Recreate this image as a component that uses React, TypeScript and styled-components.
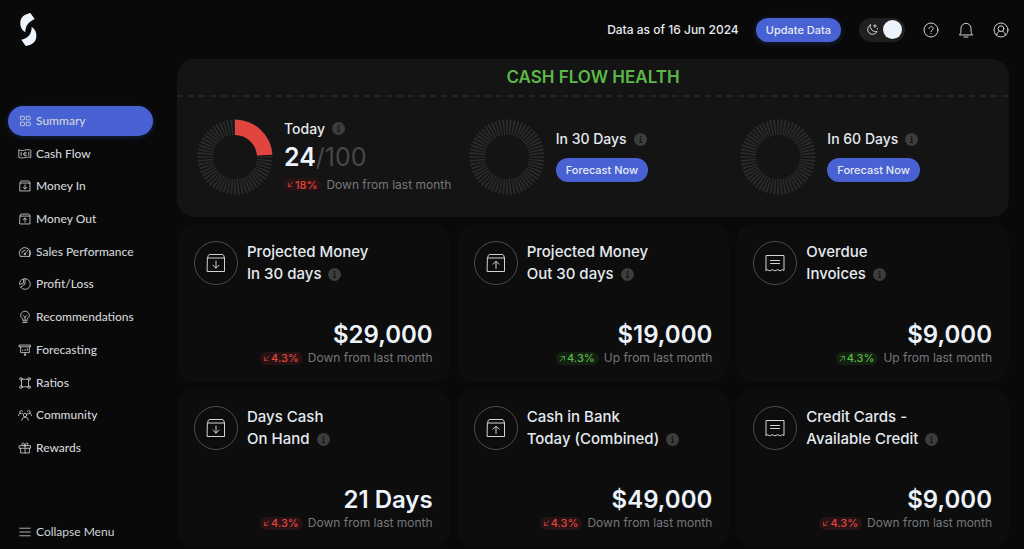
import React from "react";
import styled, { createGlobalStyle, css } from "styled-components";

const color = {
  page: "#090909",
  panel: "#141414",
  card: "#0d0d0d",
  blue: "#4862d3",
  text: "#e4eaf0",
  bright: "#ecf3fb",
  soft: "#d0d4d8",
  muted: "#75777a",
  dim: "#474747",
  red: "#e0453f",
  green: "#5cb948",
};

const body = `Inter, "Liberation Sans", sans-serif`;
const rounded = `Lato, "Liberation Sans", sans-serif`;

const GlobalStyle = createGlobalStyle`
  *, *::before, *::after { box-sizing: border-box; }
  body { margin: 0; background: ${color.page}; color: ${color.text}; font-family: ${body}; }
  h1, h2, h3, p, ul { margin: 0; padding: 0; font-weight: 500; }
  button { font: inherit; border: 0; cursor: pointer; }
`;

/* ---------- icons ---------- */

const Glyph = styled.svg<{ $size: number; $stroke?: number }>`
  width: ${(p) => p.$size}px;
  height: ${(p) => p.$size}px;
  flex: none;
  display: block;
  fill: none;
  stroke: currentColor;
  stroke-width: ${(p) => p.$stroke ?? 1.4};
  stroke-linecap: round;
  stroke-linejoin: round;
`;

const shapes = {
  grid: (
    <>
      <rect x="4" y="4" width="7" height="6" rx="1" />
      <rect x="14" y="4" width="7" height="6" rx="1" />
      <rect x="4" y="14" width="7" height="6" rx="1" />
      <rect x="14" y="14" width="7" height="6" rx="1" />
    </>
  ),
  cash: (
    <>
      <path d="M2 5c3 1.500 6 1.500 9 0.500s7-1.500 11 0V18c-4-1-7-1-10 0s-7 1-10 0Z" />
      <path d="M14.500 9.500c-1-1-4.500-1-4.500 2.500s3.500 3.500 4.500 2.500M9.500 12h4M5.500 9v5.500M18.500 9v5.500" />
    </>
  ),
  boxDown: (
    <>
      <path d="M3.500 7 4.500 4.200Q4.800 3.500 5.600 3.500H18.400Q19.200 3.500 19.500 4.200L20.500 7V20.500H3.500ZM3.500 7H20.500" />
      <path d="M12 10v7M9 14.200l3 3 3-3" />
    </>
  ),
  boxUp: (
    <>
      <path d="M3.500 7 4.500 4.200Q4.800 3.500 5.600 3.500H18.400Q19.200 3.500 19.500 4.200L20.500 7V20.500H3.500ZM3.500 7H20.500" />
      <path d="M12 17.500v-7M9 13.200l3-3 3 3" />
    </>
  ),
  gauge: (
    <>
      <path d="M4 19.500A9.500 9.500 0 0 1 16.500 5.700M20.500 9.500A9.500 9.500 0 0 1 20 19.500Z" />
      <path d="M4 19.500H20M6.500 13.500A5.500 5.500 0 0 1 12 9M12.500 14.500 19 6.500" />
      <circle cx="11.500" cy="15.500" r="1.300" />
    </>
  ),
  pie: (
    <>
      <path d="M12 2.800A9.200 9.200 0 1 1 4.500 17.500" />
      <path d="M12 2.800V12L4.500 17.500M9 3.300A9.200 9.200 0 0 0 2.800 13L9 10.500Z" />
    </>
  ),
  bulb: (
    <>
      <path d="M8.500 18v-2.500C6 14 4.500 12 4.500 9.500a7.500 7.500 0 0 1 15 0c0 2.500-1.500 4.500-4 6V18Z" />
      <path d="M8.500 21.500h7M12 17.500v-5M9 9.500l3 3 3-3" />
    </>
  ),
  board: (
    <>
      <path d="M2.500 3.500h19v3h-19ZM4.500 6.500V16.500h15V6.500M12 16.500v3M8 13v-1M12 13V11M16 13V9.500" />
      <circle cx="12" cy="20.500" r="1" />
    </>
  ),
  nodes: (
    <>
      <circle cx="5" cy="5" r="2.200" />
      <circle cx="19" cy="5" r="2.200" />
      <circle cx="5" cy="19" r="2.200" />
      <circle cx="19" cy="19" r="2.200" />
      <path d="M7.200 5.500h9.600M7.200 18.500h9.600M6 7v10M18 7v10" />
    </>
  ),
  people: (
    <>
      <circle cx="12" cy="12" r="3" />
      <path d="M6.500 21c0-3.500 2.500-5 5.500-5s5.500 1.500 5.500 5M1 13c0-2.500 1-4 3-4.500M23 13c0-2.500-1-4-3-4.500" />
      <path d="M7.500 9.500A2.800 2.800 0 1 1 8 5.500M16.500 9.500A2.800 2.800 0 1 0 16 5.500" />
    </>
  ),
  gift: (
    <>
      <path d="M2.500 8h19v4.500h-19ZM4.500 12.500V20.500h15V12.500M12 8v12.500" />
      <path d="M12 8C8 8 6.500 6.500 7 4.500s4-2 5 3.500c1-5.500 4.500-5.500 5-3.500S16 8 12 8Z" />
    </>
  ),
  menu: <path d="M3 5.500h18M3 12h18M3 18.500h18" />,
  invoice: (
    <>
      <path d="M3 19.500V4.500H21V19.500l-1.500-.8-2.200 1.100-2.500-1.100-2.800 1.100-2.800-1.100-2.500 1.100-2.200-1.100Z" />
      <path d="M7.500 9.500h9M7.500 12.500h9" />
    </>
  ),
  help: (
    <>
      <circle cx="12" cy="12" r="10.500" />
      <path d="M9 9.800c0-4 6.200-3.800 6.200-.2 0 2.400-3.200 2.500-3.200 5M12 17.300v.3" />
    </>
  ),
  bell: (
    <>
      <path d="M2.500 19C4.500 17 4.500 15 4.500 9.500a7.500 7.500 0 0 1 15 0C19.500 15 19.500 17 21.500 19Z" />
      <path d="M9 22.500h6" />
    </>
  ),
  user: (
    <>
      <circle cx="12" cy="12" r="10.500" />
      <circle cx="12" cy="10" r="4.300" />
      <path d="M5.500 19.500c.5-3.500 2.500-5 4-5.700M18.500 19.500c-.5-3.500-2.500-5-4-5.700" />
    </>
  ),
  moon: (
    <>
      <path d="M8 3.500A9.200 9.200 0 1 0 20.500 15.500C13 17.500 6.500 11 8 3.500Z" />
      <path d="M16.500 3v5M14 5.500h5M21 10v1" />
    </>
  ),
  arrowDown: <path d="M20 4 5 19M5 7v12h12" />,
  arrowUp: <path d="M4 20 19 5M7 5h12v12" />,
};

type ShapeName = keyof typeof shapes;

function Icon({ name, size = 14, stroke }: { name: ShapeName; size?: number; stroke?: number }) {
  return (
    <Glyph viewBox="0 0 24 24" $size={size} $stroke={stroke} aria-hidden="true">
      {shapes[name]}
    </Glyph>
  );
}

const InfoSvg = styled.svg`
  width: 13px;
  height: 13px;
  flex: none;
  display: block;
`;

function Info() {
  return (
    <InfoSvg viewBox="0 0 13 13" role="img" aria-label="More information">
      <circle cx="6.500" cy="6.500" r="6.500" fill="#3c3d3f" />
      <path d="M5.300 5.700H6.800V9.300M5.200 9.400H8" stroke="#151515" strokeWidth="1.100" fill="none" />
      <circle cx="6.600" cy="3.600" r="0.900" fill="#151515" />
    </InfoSvg>
  );
}

/* ---------- page frame ---------- */

const Page = styled.div`
  display: flex;
  min-height: 100vh;
`;

const Sidebar = styled.aside`
  flex: none;
  width: 177px;
  min-height: 100vh;
  padding: 13px 24px 2px 8px;
  display: flex;
  flex-direction: column;
  font-family: ${rounded};
`;

const LogoLink = styled.a`
  display: block;
  width: 17px;
  margin: 0 0 60px 12px;
  svg { display: block; width: 17px; height: 33px; }
`;

const NavList = styled.ul`
  list-style: none;
  min-height: 357px;
  display: flex;
  flex-direction: column;
  justify-content: space-between;
`;

const navItem = css`
  display: flex;
  align-items: center;
  gap: 4px;
  width: 100%;
  height: 30px;
  padding: 0 10px;
  border-radius: 15px;
  font-size: 12px;
  line-height: 16px;
  color: ${color.soft};
  text-decoration: none;
  white-space: nowrap;
`;

const NavLink = styled.a<{ $active?: boolean }>`
  ${navItem}
  ${(p) => p.$active && css`
    background: ${color.blue};
    box-shadow: 0 1px 5px rgba(72, 98, 211, 0.3);
  `}
`;

const CollapseButton = styled.button`
  ${navItem}
  margin-top: auto;
  background: none;
`;

const Main = styled.main`
  flex: 1;
  min-width: 0;
  padding: 0 15px 2px 0;
`;

/* ---------- header ---------- */

const TopBar = styled.header`
  display: flex;
  align-items: center;
  justify-content: flex-end;
  height: 59px;
`;

const DataDate = styled.p`
  font-size: 12px;
  line-height: 16px;
  color: ${color.text};
  margin-right: 17px;
`;

const PillButton = styled.button<{ $glow?: boolean }>`
  height: 24px;
  padding: 0 10px;
  border-radius: 12px;
  background: ${color.blue};
  color: ${color.text};
  font-size: 11px;
  font-weight: 500;
  white-space: nowrap;
  ${(p) => p.$glow && css`box-shadow: 0 1px 6px rgba(72, 98, 211, 0.3);`}
`;

const ThemeSwitch = styled.label`
  position: relative;
  display: flex;
  align-items: center;
  justify-content: space-between;
  width: 46px;
  height: 24px;
  margin: 0 18px;
  padding: 0 3px 0 7px;
  border-radius: 12px;
  background: #1f1f1f;
  color: ${color.soft};
  cursor: pointer;
  input { position: absolute; inset: 0; margin: 0; opacity: 0; }
`;

const Knob = styled.span`
  width: 19px;
  height: 19px;
  border-radius: 50%;
  background: ${color.bright};
`;

const IconRow = styled.div`
  display: flex;
  gap: 19px;
`;

const IconButton = styled.button`
  padding: 0;
  background: none;
  color: ${color.soft};
`;

/* ---------- health panel ---------- */

const HealthPanel = styled.section`
  min-height: 158px;
  border-radius: 18px;
  background: ${color.panel};
`;

const HealthTitle = styled.h1`
  padding: 6px 0;
  text-align: center;
  font-size: 17px;
  line-height: 24px;
  font-weight: 600;
  color: ${color.green};
`;

const Dashes = styled.div`
  height: 2px;
  background: repeating-linear-gradient(90deg, #242424 0 6px, transparent 6px 11px);
`;

const Gauges = styled.div`
  display: grid;
  grid-template-columns: repeat(3, 1fr);
  column-gap: 3px;
  padding-left: 20px;
`;

const GaugeItem = styled.article`
  display: flex;
  align-items: center;
  gap: 11px;
  height: 119px;
`;

const Dial = styled.svg`
  width: 76px;
  height: 76px;
  flex: none;
`;

const GaugeHeading = styled.h2`
  display: flex;
  align-items: center;
  gap: 7px;
  font-size: 14px;
  line-height: 16px;
  color: ${color.text};
`;

const GaugeText = styled.div`
  display: flex;
  flex-direction: column;
  align-items: flex-start;
  gap: 11px;
`;

const ScoreText = styled(GaugeText)`
  gap: 6px;
`;

const Score = styled.p`
  font-size: 25px;
  line-height: 28px;
  font-weight: 600;
  color: ${color.bright};
  span { color: ${color.dim}; font-weight: 400; }
`;

/* ---------- trend ---------- */

const TrendRow = styled.p<{ $end?: boolean }>`
  display: flex;
  align-items: center;
  justify-content: ${(p) => (p.$end ? "flex-end" : "flex-start")};
  gap: 5px;
  font-size: 12px;
  line-height: 16px;
  font-weight: 400;
  white-space: nowrap;
  color: ${color.muted};
`;

const Badge = styled.span<{ $up?: boolean }>`
  display: flex;
  align-items: center;
  gap: 1px;
  height: 13px;
  padding: 0 4px 0 3px;
  border-radius: 7px;
  font-size: 11px;
  font-weight: 500;
  color: ${(p) => (p.$up ? color.green : color.red)};
  background: ${(p) => (p.$up ? "#142010" : "#271313")};
`;

function Trend({ up, value, end }: { up?: boolean; value: string; end?: boolean }) {
  return (
    <TrendRow $end={end}>
      <Badge $up={up}>
        <Icon name={up ? "arrowUp" : "arrowDown"} size={7} stroke={2.5} />
        {value}
      </Badge>
      {up ? "Up from last month" : "Down from last month"}
    </TrendRow>
  );
}

/* ---------- metric cards ---------- */

const CardGrid = styled.section`
  display: grid;
  grid-template-columns: repeat(3, 1fr);
  gap: 7px;
  margin-top: 7px;
`;

const Card = styled.article`
  display: flex;
  flex-direction: column;
  justify-content: space-between;
  min-height: 158px;
  padding: 17px 17px 16px;
  border-radius: 18px;
  background: ${color.card};
`;

const CardHead = styled.div`
  display: flex;
  align-items: center;
  gap: 9px;
`;

const Ring = styled.span`
  flex: none;
  width: 44px;
  height: 44px;
  display: grid;
  place-items: center;
  border: 1px solid #4b4c4e;
  border-radius: 50%;
  color: ${color.soft};
`;

const CardTitle = styled.h2`
  font-size: 15px;
  line-height: 22px;
  color: ${color.text};
`;

const TitleLine = styled.span`
  display: flex;
  align-items: center;
  gap: 7px;
  white-space: nowrap;
`;

const Amount = styled.p`
  text-align: right;
  font-size: 24px;
  line-height: 30px;
  font-weight: 600;
  color: ${color.bright};
`;

/* ---------- dial drawing ---------- */

const TICKS = 60;

function point(angle: number, radius: number) {
  const rad = ((angle - 90) * Math.PI) / 180;
  return `${(38 + radius * Math.cos(rad)).toFixed(2)} ${(38 + radius * Math.sin(rad)).toFixed(2)}`;
}

function HealthDial({ percent = 0 }: { percent?: number }) {
  const end = percent * 3.6;
  return (
    <Dial viewBox="0 0 76 76" aria-hidden="true">
      {Array.from({ length: TICKS }, (_, i) => {
        const a = (i * 360) / TICKS;
        return (
          <path
            key={i}
            d={`M${point(a - 1.6, 37.5)}L${point(a + 1.6, 37.5)}L${point(a + 1.6, 22)}L${point(a - 1.6, 22)}Z`}
            fill="#2b2b2b"
          />
        );
      })}
      {percent > 0 && (
        <path
          d={`M${point(0, 37.5)}A37.5 37.5 0 0 1 ${point(end, 37.5)}L${point(end, 22)}A22 22 0 0 0 ${point(0, 22)}Z`}
          fill={color.red}
        />
      )}
    </Dial>
  );
}

/* ---------- data ---------- */

const nav: { icon: ShapeName; label: string }[] = [
  { icon: "grid", label: "Summary" },
  { icon: "cash", label: "Cash Flow" },
  { icon: "boxDown", label: "Money In" },
  { icon: "boxUp", label: "Money Out" },
  { icon: "gauge", label: "Sales Performance" },
  { icon: "pie", label: "Profit/Loss" },
  { icon: "bulb", label: "Recommendations" },
  { icon: "board", label: "Forecasting" },
  { icon: "nodes", label: "Ratios" },
  { icon: "people", label: "Community" },
  { icon: "gift", label: "Rewards" },
];

const cards: { icon: ShapeName; lines: [string, string]; amount: string; up?: boolean }[] = [
  { icon: "boxDown", lines: ["Projected Money", "In 30 days"], amount: "$29,000" },
  { icon: "boxUp", lines: ["Projected Money", "Out 30 days"], amount: "$19,000", up: true },
  { icon: "invoice", lines: ["Overdue", "Invoices"], amount: "$9,000", up: true },
  { icon: "boxDown", lines: ["Days Cash", "On Hand"], amount: "21 Days" },
  { icon: "boxUp", lines: ["Cash in Bank", "Today (Combined)"], amount: "$49,000" },
  { icon: "invoice", lines: ["Credit Cards -", "Available Credit"], amount: "$9,000" },
];

export default function App() {
  return (
    <Page>
      <GlobalStyle />
      <Sidebar>
        <LogoLink href="#" aria-label="Home">
          <svg viewBox="0 0 51 99" fill="#edf4fb" aria-hidden="true">
            <path d="M31 0 44 18C25 27 16 39 16 58 4 50 0 39 1 27 2 13 14 3 31 0Z" />
            <path d="M35 41C47 50 50 60 49 71 48 86 36 96 17 99L4 80C26 74 35 63 35 41Z" />
          </svg>
        </LogoLink>
        <nav aria-label="Main">
          <NavList>
            {nav.map((item, i) => (
              <li key={item.label}>
                <NavLink href="#" $active={i === 0} aria-current={i === 0 ? "page" : undefined}>
                  <Icon name={item.icon} />
                  {item.label}
                </NavLink>
              </li>
            ))}
          </NavList>
        </nav>
        <CollapseButton type="button">
          <Icon name="menu" />
          Collapse Menu
        </CollapseButton>
      </Sidebar>

      <Main>
        <TopBar>
          <DataDate>Data as of 16 Jun 2024</DataDate>
          <PillButton type="button" $glow>Update Data</PillButton>
          <ThemeSwitch>
            <input type="checkbox" role="switch" defaultChecked aria-label="Dark mode" />
            <Icon name="moon" size={13} stroke={1.8} />
            <Knob />
          </ThemeSwitch>
          <IconRow>
            <IconButton type="button" aria-label="Help"><Icon name="help" size={16} stroke={1.5} /></IconButton>
            <IconButton type="button" aria-label="Notifications"><Icon name="bell" size={16} stroke={1.5} /></IconButton>
            <IconButton type="button" aria-label="Account"><Icon name="user" size={16} stroke={1.5} /></IconButton>
          </IconRow>
        </TopBar>

        <HealthPanel>
          <HealthTitle>CASH FLOW HEALTH</HealthTitle>
          <Dashes />
          <Gauges>
            <GaugeItem>
              <HealthDial percent={24} />
              <ScoreText>
                <GaugeHeading>Today <Info /></GaugeHeading>
                <Score>24<span>/100</span></Score>
                <Trend value="18%" />
              </ScoreText>
            </GaugeItem>
            {["In 30 Days", "In 60 Days"].map((label) => (
              <GaugeItem key={label}>
                <HealthDial />
                <GaugeText>
                  <GaugeHeading>{label} <Info /></GaugeHeading>
                  <PillButton type="button">Forecast Now</PillButton>
                </GaugeText>
              </GaugeItem>
            ))}
          </Gauges>
        </HealthPanel>

        <CardGrid>
          {cards.map((card) => (
            <Card key={card.lines.join(" ")}>
              <CardHead>
                <Ring><Icon name={card.icon} size={24} stroke={1} /></Ring>
                <CardTitle>
                  <TitleLine>{card.lines[0]}</TitleLine>
                  <TitleLine>{card.lines[1]} <Info /></TitleLine>
                </CardTitle>
              </CardHead>
              <div>
                <Amount>{card.amount}</Amount>
                <Trend up={card.up} value="4.3%" end />
              </div>
            </Card>
          ))}
        </CardGrid>
      </Main>
    </Page>
  );
}
